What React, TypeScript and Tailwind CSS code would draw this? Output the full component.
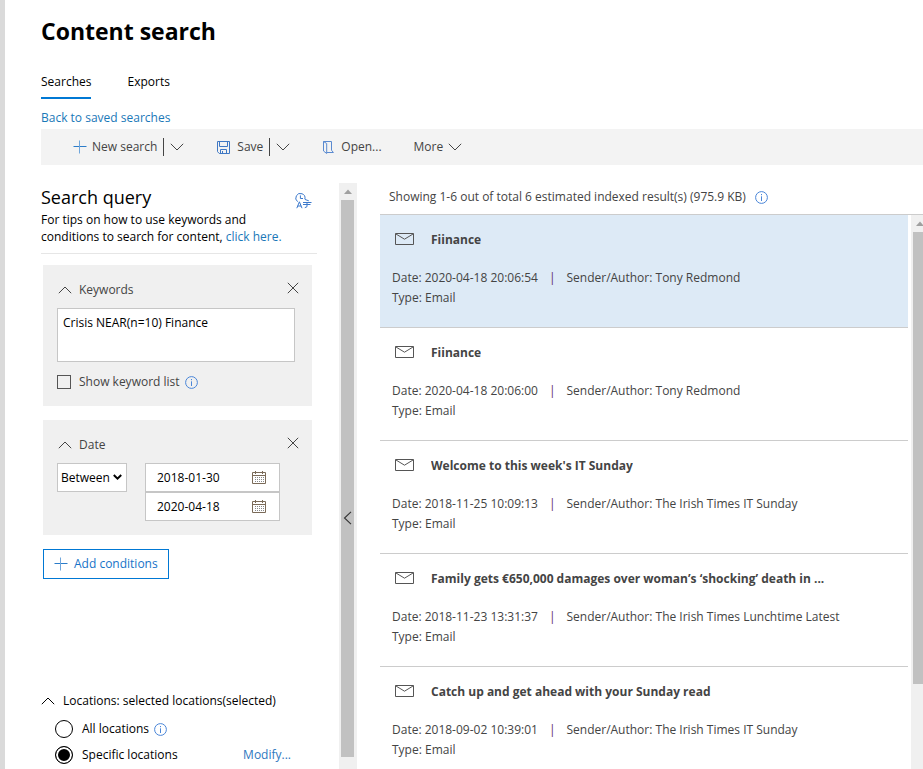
import type { ReactNode } from 'react';

const results = [
  { title: 'Fiinance', date: '2020-04-18 20:06:54', author: 'Tony Redmond', selected: true },
  { title: 'Fiinance', date: '2020-04-18 20:06:00', author: 'Tony Redmond' },
  { title: "Welcome to this week's IT Sunday", date: '2018-11-25 10:09:13', author: 'The Irish Times IT Sunday' },
  {
    title: 'Family gets €650,000 damages over woman’s ‘shocking’ death in ...',
    date: '2018-11-23 13:31:37',
    author: 'The Irish Times Lunchtime Latest',
  },
  { title: 'Catch up and get ahead with your Sunday read', date: '2018-09-02 10:39:01', author: 'The Irish Times IT Sunday' },
];

function Chevron({ up = false }: { up?: boolean }) {
  return (
    <svg width="14" height="8" viewBox="0 0 14 8" fill="none" stroke="currentColor" aria-hidden="true">
      <path d={up ? 'M.8 7.2 7 1l6.2 6.2' : 'M.8.8 7 7 13.2.8'} />
    </svg>
  );
}

function Plus() {
  return (
    <svg width="14" height="14" viewBox="0 0 14 14" fill="none" stroke="#2b7cc9" aria-hidden="true">
      <path d="M.5 6.5h13" />
      <path d="M6.5.5v13" stroke="#6fa6dc" />
    </svg>
  );
}

function Info() {
  return (
    <svg width="13" height="13" viewBox="0 0 13 13" fill="none" stroke="#4a86d8" className="shrink-0" aria-hidden="true">
      <circle cx="6.5" cy="6.5" r="5.9" />
      <path d="M6.5 5.3V10M6.5 3v1.2" />
    </svg>
  );
}

function SaveIcon() {
  return (
    <svg width="13" height="13" viewBox="0 0 13 13" fill="none" stroke="#3f78c4" aria-hidden="true">
      <path d="M.5.5h12v12H2.3L.5 10.7zM2.5.5v5h8v-5M3.5 12.5v-4h6v4M5.5 10v2.5" />
    </svg>
  );
}

function OpenIcon() {
  return (
    <svg width="11" height="13" viewBox="0 0 11 13" fill="none" stroke="#5a8ad0" aria-hidden="true">
      <path d="M.5.5h8v8.7l1.9 2.3H3.7M.5.5l3.2 2v10L.5 10z" />
    </svg>
  );
}

function LanguageIcon() {
  return (
    <svg width="17" height="16" viewBox="0 0 17 16" fill="none" stroke="#3a78cc" aria-hidden="true">
      <path d="M9.9 6A4.6 4.6 0 1 0 2.6 8.7M5.4 2.4v3.1H8" />
      <path d="m1.8 15.2 2.6-6.4L7 15.2M2.7 13h3.4M8 9.5h8.5M8 11.5h7.5M12 9.5v4.2l-2.2 1M9.8 6.4l4 1.4" />
    </svg>
  );
}

function Mail() {
  return (
    <svg width="19" height="12" viewBox="0 0 19 12" fill="none" stroke="#555" className="mb-0.5 shrink-0" aria-hidden="true">
      <path d="M.5.5h18v11H.5zM.8.9l8.7 5.3L18.2.9" />
    </svg>
  );
}

function Calendar() {
  return (
    <svg width="14" height="13" viewBox="0 0 14 13" fill="none" aria-hidden="true">
      <path d="M.5 1.5h13v11H.5zM.5 4.5h13M3.5 0v3M10.5 0v3" stroke="#7a6a58" />
      <path d="M3 6.5h9M3 8.5h9M3 10.5h9" stroke="#888" strokeDasharray="1 1" />
    </svg>
  );
}

function Close() {
  return (
    <svg width="12" height="12" viewBox="0 0 12 12" fill="none" stroke="#444" aria-hidden="true">
      <path d="m.8.8 10.4 10.4M11.2.8.8 11.2" />
    </svg>
  );
}

function Card({ title, children }: { title: string; children: ReactNode }) {
  return (
    <section className="mx-0.5 mb-3.5 bg-[#f0f0f0] px-3.5 pt-[15px] pb-3.5">
      <div className="flex h-5 text-[#444]">
        <button type="button" className="ml-px flex items-center gap-[7px]">
          <Chevron up />
          <span>{title}</span>
        </button>
        <button type="button" aria-label={`Remove ${title}`} className="-mr-px ml-auto pb-1">
          <Close />
        </button>
      </div>
      {children}
    </section>
  );
}

function DateField({ label, value }: { label: string; value: string }) {
  return (
    <div className="flex h-[29px] items-center border border-[#c6c6c6] bg-white pr-[13px] pl-[11px]">
      <input aria-label={label} defaultValue={value} className="w-0 flex-1 outline-none" />
      <button type="button" aria-label={`Pick ${label}`}>
        <Calendar />
      </button>
    </div>
  );
}

export default function App() {
  return (
    <div className="flex h-screen overflow-hidden bg-white font-['Open_Sans','Noto_Sans',sans-serif] text-[12px] leading-5 text-black">
      <div className="w-[5px] shrink-0 bg-[#dadada]" />
      <div className="flex min-w-0 flex-1 flex-col pl-9">
        <h1 className="pt-[15px] text-[23px] leading-8 font-bold">Content search</h1>

        <nav className="mt-[25px] flex gap-9">
          <a href="#searches" className="border-b-2 border-[#0078d4] pb-[5px]">
            Searches
          </a>
          <a href="#exports">Exports</a>
        </nav>
        <a href="#saved" className="mt-[9px] self-start text-[#1a78b8]">
          Back to saved searches
        </a>

        <div role="toolbar" className="mt-px flex h-9 shrink-0 items-center bg-[#f3f3f3] pl-8 text-[#444]">
          <button type="button" className="flex items-center gap-[5px]">
            <Plus />
            New search
          </button>
          <span className="mx-1.5 h-[18px] w-px bg-[#444]" />
          <button type="button" aria-label="New search options">
            <Chevron />
          </button>
          <button type="button" className="ml-[33px] flex items-center gap-[7px]">
            <SaveIcon />
            Save
          </button>
          <span className="mx-1.5 h-[18px] w-px bg-[#444]" />
          <button type="button" aria-label="Save options">
            <Chevron />
          </button>
          <button type="button" className="ml-[33px] flex items-center gap-[7px]">
            <OpenIcon />
            Open...
          </button>
          <button type="button" className="ml-8 flex items-center gap-[5px]">
            More
            <Chevron />
          </button>
        </div>

        <div className="flex min-h-0 flex-1">
          <aside className="flex w-[276px] shrink-0 flex-col pt-5">
            <div className="flex items-end justify-between pr-[5px] pb-0.5">
              <h2 className="text-[18px] leading-6">Search query</h2>
              <button type="button" aria-label="Query language">
                <LanguageIcon />
              </button>
            </div>
            <p className="border-b border-[#e6e6e6] pb-2 leading-[17px]">
              For tips on how to use keywords and
              <br />
              conditions to search for content,{' '}
              <a href="#help" className="text-[#1a78b8]">
                click here.
              </a>
            </p>

            <div className="mt-[11px] w-[273px]">
              <Card title="Keywords">
                <textarea
                  aria-label="Keywords"
                  defaultValue="Crisis NEAR(n=10) Finance"
                  className="mt-2 block h-[54px] w-[238px] resize-none border border-[#c6c6c6] bg-white px-[5px] py-1 outline-none"
                />
                <div className="mt-2.5 flex items-center text-[#444]">
                  <input id="kw" type="checkbox" className="mr-2 size-3.5 appearance-none border border-[#555] checked:bg-[#555]" />
                  <label htmlFor="kw" className="mr-[5px]">
                    Show keyword list
                  </label>
                  <Info />
                </div>
              </Card>
              <Card title="Date">
                <div className="mt-2 flex items-start justify-between pr-[18px]">
                  <div className="relative">
                    <select aria-label="Date condition" className="h-[29px] w-[70px] appearance-none border border-[#c6c6c6] bg-white pl-[3px] outline-none">
                      <option>Between</option>
                    </select>
                    <svg width="9" height="7" viewBox="0 0 9 7" fill="none" stroke="#000" strokeWidth="2" className="pointer-events-none absolute top-[11px] right-[5px]" aria-hidden="true">
                      <path d="m.8 1 3.7 3.7L8.2 1" />
                    </svg>
                  </div>
                  <div className="w-[135px]">
                    <DateField label="Start date" value="2018-01-30" />
                    <DateField label="End date" value="2020-04-18" />
                  </div>
                </div>
              </Card>
            </div>
            <button type="button" className="ml-0.5 flex h-[30px] items-center gap-1.5 self-start border border-[#0078d4] px-2.5 text-[#1673c8]">
              <Plus />
              Add conditions
            </button>

            <fieldset className="mt-28">
              <legend className="flex items-center gap-2">
                <Chevron up />
                Locations: selected locations(selected)
              </legend>
              <div className="mt-2 ml-3.5 flex items-center">
                <input id="all" name="locations" type="radio" className="mr-[9px] size-[18px] appearance-none rounded-full border border-black checked:bg-black checked:shadow-[inset_0_0_0_2px_white]" />
                <label htmlFor="all" className="mr-[5px]">
                  All locations
                </label>
                <Info />
              </div>
              <div className="mt-1.5 ml-3.5 flex items-center pr-[26px]">
                <input id="specific" name="locations" type="radio" defaultChecked className="mr-[9px] size-[18px] appearance-none rounded-full border border-black checked:bg-black checked:shadow-[inset_0_0_0_2px_white]" />
                <label htmlFor="specific">Specific locations</label>
                <a href="#modify" className="ml-auto text-[#2f78c0]">
                  Modify...
                </a>
              </div>
            </fieldset>
          </aside>

          <div className="relative mt-[18px] ml-[22px] flex w-[18px] shrink-0 flex-col bg-[#f0f0f0] px-0.5 pb-3">
            <svg width="14" height="17" viewBox="0 0 14 17" className="shrink-0" aria-hidden="true">
              <path d="M3 11h8L7 6.5z" fill="#a0a0a0" />
            </svg>
            <div className="w-[13px] flex-1 bg-[#c1c1c1]" />
            <button type="button" aria-label="Collapse query panel" className="absolute top-[328px] left-1">
              <svg width="9" height="14" viewBox="0 0 9 14" fill="none" stroke="#333" strokeWidth="1.1" aria-hidden="true">
                <path d="M8 .8 1.5 7 8 13.2" />
              </svg>
            </button>
          </div>

          <main className="ml-[23px] flex min-w-0 flex-1 flex-col pt-[22px]">
            <div className="flex items-center gap-[9px] pb-[7px] pl-[9px] text-[#444]">
              Showing 1-6 out of total 6 estimated indexed result(s) (975.9 KB)
              <Info />
            </div>
            <div className="flex min-h-0 flex-1 border-t border-[#ccc]">
              <ul className="min-w-0 flex-1 overflow-hidden">
                {results.map((r) => (
                  <li key={r.date} className={`border-b border-[#ccc] px-3 pt-[15px] pb-[19px] text-[#444] ${r.selected ? 'bg-[#ddeaf6]' : ''}`}>
                    <div className="flex items-center gap-[17px] pl-[3px]">
                      <Mail />
                      <h3 className="truncate font-bold">{r.title}</h3>
                    </div>
                    <div className="mt-[18px] flex">
                      <span>Date: {r.date}</span>
                      <span className="mx-[11px] text-[#5c2d6e]">|</span>
                      <span>Sender/Author: {r.author}</span>
                    </div>
                    <div>Type: Email</div>
                  </li>
                ))}
              </ul>
              <div className="ml-[3px] flex w-3 shrink-0 flex-col bg-[#f0f0f0] pl-0.5">
                <svg width="10" height="17" viewBox="0 0 10 17" className="shrink-0" aria-hidden="true">
                  <path d="M3 11h8L7 6.5z" fill="#a0a0a0" />
                </svg>
                <div className="h-[452px] bg-[#c1c1c1]" />
              </div>
            </div>
          </main>
        </div>
      </div>
    </div>
  );
}
